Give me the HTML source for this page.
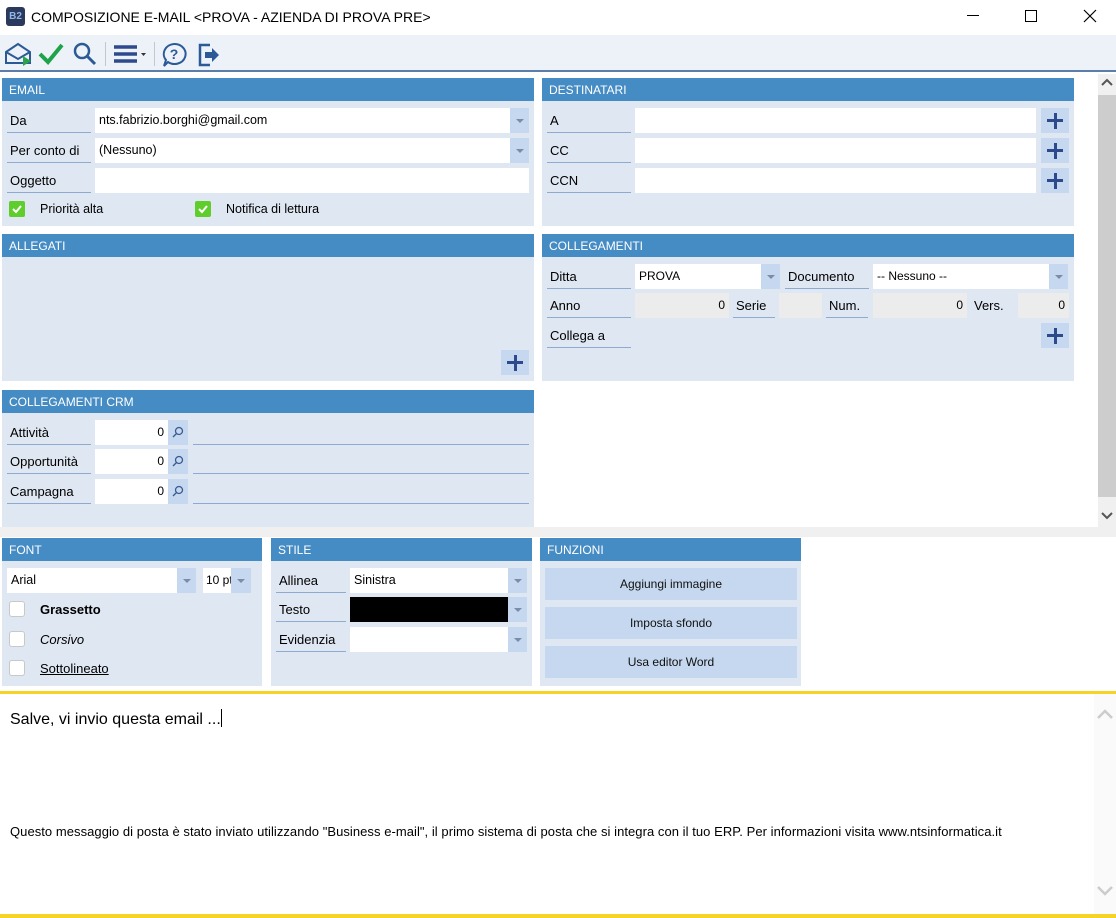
<!DOCTYPE html>
<html><head><meta charset="utf-8"><style>
*{box-sizing:border-box;margin:0;padding:0}
body{width:1116px;height:918px;background:#fff;position:relative;overflow:hidden;font-family:"Liberation Sans",Arial,sans-serif;font-size:13px;color:#000}
.a{position:absolute}
.hd{position:absolute;background:#468cc4;color:#fff;font-size:12px;height:23px;line-height:25px;padding-left:7px}
.pn{position:absolute;background:#dfe7f2}
.lb{position:absolute;height:25px;line-height:26px;padding-left:3px;border-bottom:1px solid #8eaad0;font-size:13px;white-space:nowrap}
.in{position:absolute;background:#fff;height:25px;line-height:25px;padding-left:4px;font-size:12px;white-space:nowrap;overflow:hidden}
.dis{position:absolute;background:#ececec;height:25px;line-height:25px;padding-right:4px;text-align:right;font-size:12px}
.dd{position:absolute;background:#c5d8ef;width:19px;height:25px}
.dd:after{content:"";position:absolute;left:6px;top:11px;border-left:4px solid transparent;border-right:4px solid transparent;border-top:4px solid #7a8ca8}
.pl{position:absolute;background:#c5d8ef;width:28px;height:25px}
.pl:before{content:"";position:absolute;left:6px;top:11px;width:16px;height:3px;background:#2c4a8c}
.pl:after{content:"";position:absolute;left:12.5px;top:4.5px;width:3px;height:16px;background:#2c4a8c}
.mg{position:absolute;background:#c5d8ef;width:20px;height:25px}
.cb{position:absolute;width:16px;height:16px;border:1px solid #c8c8c8;background:#fff;border-radius:3px}
.ck{position:absolute;width:16px;height:16px;background:#5fce2c;border-radius:2px}
.bt{position:absolute;background:#c5d8ef;height:32px;line-height:33px;text-align:center;font-size:12px;color:#111}
.ln{position:absolute;height:25px;border-bottom:1px solid #8eaad0}
</style></head><body>
<div class="a" style="left:6px;top:7px;width:19px;height:19px;background:#2b3a5c;border-radius:3px;color:#8fb6e8;font-size:10px;font-weight:bold;line-height:19px;text-align:center">B2</div>
<div class="a" style="left:31px;top:7px;font-size:14px;line-height:20px">COMPOSIZIONE E-MAIL &lt;PROVA - AZIENDA DI PROVA PRE&gt;</div>
<div class="a" style="left:967px;top:15px;width:12px;height:1px;background:#000"></div>
<div class="a" style="left:1025px;top:10px;width:12px;height:12px;border:1px solid #000"></div>
<svg class="a" style="left:1083px;top:9px" width="14" height="14"><path d="M1 1L13 13M13 1L1 13" stroke="#000" stroke-width="1.2"/></svg>
<div class="a" style="left:0;top:35px;width:1116px;height:37px;background:#edf2f9;border-bottom:2px solid #5a7ea8"></div>
<svg class="a" style="left:4px;top:41px" width="28" height="26"><path d="M2 11L14 3L26 11V22H2Z M2 11L14 18L26 11" fill="none" stroke="#2c5a96" stroke-width="2"/><path d="M19 15L27 20L19 25Z" fill="#2aa34a"/></svg>
<svg class="a" style="left:38px;top:42px" width="26" height="24"><path d="M2 12L10 20L24 3" fill="none" stroke="#1fa34a" stroke-width="4"/></svg>
<svg class="a" style="left:72px;top:42px" width="26" height="24"><circle cx="10" cy="9" r="7" fill="none" stroke="#2c5a96" stroke-width="2.5"/><path d="M15 14L23 22" stroke="#2c5a96" stroke-width="3"/></svg>
<div class="a" style="left:105px;top:42px;width:1px;height:24px;background:#c0c8d4"></div>
<svg class="a" style="left:113px;top:44px" width="38" height="20"><path d="M1 3H24M1 10H24M1 17H24" stroke="#2c4a8c" stroke-width="3.5"/><path d="M28 9L33 9L30.5 12Z" fill="#333"/></svg>
<div class="a" style="left:154px;top:42px;width:1px;height:24px;background:#c0c8d4"></div>
<svg class="a" style="left:161px;top:42px" width="26" height="26"><path d="M13 2A11 10 0 1 1 7 20L3 24L5 18A11 10 0 0 1 13 2Z" fill="none" stroke="#2c5a96" stroke-width="2"/><text x="13" y="17" font-family="Liberation Sans" font-weight="bold" font-size="14" fill="#2c5a96" text-anchor="middle">?</text></svg>
<svg class="a" style="left:196px;top:42px" width="26" height="26"><path d="M14 3H4V23H14" fill="none" stroke="#2c5a96" stroke-width="2.5"/><path d="M9 10H16V6L23 13L16 20V16H9Z" fill="#2c5a96"/></svg>
<div class="a" style="left:1098px;top:74px;width:18px;height:453px;background:#f0f0f0"></div>
<div class="a" style="left:1098px;top:95px;width:18px;height:402px;background:#cdcdcd"></div>
<svg class="a" style="left:1101px;top:78px" width="12" height="10"><path d="M1 7L6 2L11 7" fill="none" stroke="#555" stroke-width="2"/></svg>
<svg class="a" style="left:1101px;top:511px" width="12" height="10"><path d="M1 2L6 7L11 2" fill="none" stroke="#555" stroke-width="2"/></svg>
<div class="a" style="left:0;top:527px;width:1116px;height:10px;background:#f0f0f0"></div>

<div class="pn" style="left:2px;top:78px;width:532px;height:148px"></div>
<div class="hd" style="left:2px;top:78px;width:532px">EMAIL</div>
<div class="lb" style="left:7px;top:108px;width:84px">Da</div>
<div class="in" style="left:95px;top:108px;width:415px;font-size:12.5px">nts.fabrizio.borghi@gmail.com</div><div class="dd" style="left:510px;top:108px"></div>
<div class="lb" style="left:7px;top:138px;width:84px">Per conto di</div>
<div class="in" style="left:95px;top:138px;width:415px;font-size:12.5px">(Nessuno)</div><div class="dd" style="left:510px;top:138px"></div>
<div class="lb" style="left:7px;top:168px;width:84px">Oggetto</div>
<div class="in" style="left:95px;top:168px;width:434px"></div>
<div class="ck" style="left:9px;top:201px"></div><svg class="a" style="left:9px;top:201px" width="16" height="16"><path d="M4 8L7 11L12 5" fill="none" stroke="#fff" stroke-width="2"/></svg>
<div class="a" style="left:40px;top:202px;font-size:12.5px">Priorità alta</div>
<div class="ck" style="left:195px;top:201px"></div><svg class="a" style="left:195px;top:201px" width="16" height="16"><path d="M4 8L7 11L12 5" fill="none" stroke="#fff" stroke-width="2"/></svg>
<div class="a" style="left:226px;top:202px;font-size:12.5px">Notifica di lettura</div>

<div class="pn" style="left:542px;top:78px;width:532px;height:148px"></div>
<div class="hd" style="left:542px;top:78px;width:532px">DESTINATARI</div>
<div class="lb" style="left:547px;top:108px;width:84px">A</div><div class="in" style="left:635px;top:108px;width:401px"></div><div class="pl" style="left:1041px;top:108px"></div>
<div class="lb" style="left:547px;top:138px;width:84px">CC</div><div class="in" style="left:635px;top:138px;width:401px"></div><div class="pl" style="left:1041px;top:138px"></div>
<div class="lb" style="left:547px;top:168px;width:84px">CCN</div><div class="in" style="left:635px;top:168px;width:401px"></div><div class="pl" style="left:1041px;top:168px"></div>

<div class="pn" style="left:2px;top:234px;width:532px;height:147px"></div>
<div class="hd" style="left:2px;top:234px;width:532px">ALLEGATI</div>
<div class="pl" style="left:501px;top:350px"></div>

<div class="pn" style="left:542px;top:234px;width:532px;height:147px"></div>
<div class="hd" style="left:542px;top:234px;width:532px">COLLEGAMENTI</div>
<div class="lb" style="left:547px;top:264px;width:84px">Ditta</div>
<div class="in" style="left:635px;top:264px;width:126px">PROVA</div><div class="dd" style="left:761px;top:264px"></div>
<div class="lb" style="left:785px;top:264px;width:84px">Documento</div>
<div class="in" style="left:873px;top:264px;width:176px">-- Nessuno --</div><div class="dd" style="left:1049px;top:264px"></div>
<div class="lb" style="left:547px;top:293px;width:84px">Anno</div>
<div class="dis" style="left:635px;top:293px;width:94px">0</div>
<div class="lb" style="left:733px;top:293px;width:42px">Serie</div>
<div class="dis" style="left:779px;top:293px;width:43px"></div>
<div class="lb" style="left:826px;top:293px;width:42px">Num.</div>
<div class="dis" style="left:873px;top:293px;width:94px">0</div>
<div class="a" style="left:974px;top:293px;line-height:26px">Vers.</div>
<div class="dis" style="left:1018px;top:293px;width:51px">0</div>
<div class="lb" style="left:547px;top:323px;width:84px">Collega a</div>
<div class="pl" style="left:1041px;top:323px"></div>

<div class="pn" style="left:2px;top:390px;width:532px;height:137px"></div>
<div class="hd" style="left:2px;top:390px;width:532px">COLLEGAMENTI CRM</div>
<div class="lb" style="left:7px;top:420px;width:84px">Attività</div><div class="dis" style="left:95px;top:420px;width:73px;background:#fff">0</div><div class="mg" style="left:168px;top:420px"></div><div class="ln" style="left:193px;top:420px;width:336px"></div>
<div class="lb" style="left:7px;top:449px;width:84px">Opportunità</div><div class="dis" style="left:95px;top:449px;width:73px;background:#fff">0</div><div class="mg" style="left:168px;top:449px"></div><div class="ln" style="left:193px;top:449px;width:336px"></div>
<div class="lb" style="left:7px;top:479px;width:84px">Campagna</div><div class="dis" style="left:95px;top:479px;width:73px;background:#fff">0</div><div class="mg" style="left:168px;top:479px"></div><div class="ln" style="left:193px;top:479px;width:336px"></div>
<svg class="a" style="left:171px;top:425px" width="14" height="80"><g fill="none" stroke="#3a5a90" stroke-width="1.3"><circle cx="8" cy="6" r="3.5"/><path d="M5.5 8.5L2 12"/><circle cx="8" cy="35" r="3.5"/><path d="M5.5 37.5L2 41"/><circle cx="8" cy="65" r="3.5"/><path d="M5.5 67.5L2 71"/></g></svg>

<div class="pn" style="left:2px;top:538px;width:260px;height:148px"></div>
<div class="hd" style="left:2px;top:538px;width:260px">FONT</div>
<div class="in" style="left:7px;top:568px;width:170px;font-size:12.5px">Arial</div><div class="dd" style="left:177px;top:568px"></div>
<div class="in" style="left:203px;top:568px;width:28px;padding-left:3px;font-size:12px">10 pt</div><div class="dd" style="left:231px;top:568px;width:20px"></div>
<div class="cb" style="left:9px;top:601px"></div><div class="a" style="left:40px;top:602px;font-weight:bold">Grassetto</div>
<div class="cb" style="left:9px;top:631px"></div><div class="a" style="left:40px;top:632px;font-style:italic">Corsivo</div>
<div class="cb" style="left:9px;top:660px"></div><div class="a" style="left:40px;top:661px;text-decoration:underline">Sottolineato</div>

<div class="pn" style="left:271px;top:538px;width:261px;height:148px"></div>
<div class="hd" style="left:271px;top:538px;width:261px">STILE</div>
<div class="lb" style="left:276px;top:568px;width:70px">Allinea</div><div class="in" style="left:350px;top:568px;width:158px;font-size:12.5px">Sinistra</div><div class="dd" style="left:508px;top:568px"></div>
<div class="lb" style="left:276px;top:597px;width:70px">Testo</div><div class="in" style="left:350px;top:597px;width:158px;background:#000"></div><div class="dd" style="left:508px;top:597px"></div>
<div class="lb" style="left:276px;top:627px;width:70px">Evidenzia</div><div class="in" style="left:350px;top:627px;width:158px"></div><div class="dd" style="left:508px;top:627px"></div>

<div class="pn" style="left:540px;top:538px;width:261px;height:148px"></div>
<div class="hd" style="left:540px;top:538px;width:261px">FUNZIONI</div>
<div class="bt" style="left:545px;top:568px;width:252px">Aggiungi immagine</div>
<div class="bt" style="left:545px;top:607px;width:252px">Imposta sfondo</div>
<div class="bt" style="left:545px;top:646px;width:252px">Usa editor Word</div>

<div class="a" style="left:0;top:691px;width:1116px;height:3px;background:#f5d327"></div>
<div class="a" style="left:0;top:914px;width:1116px;height:4px;background:#f5d327"></div>
<div class="a" style="left:1094px;top:694px;width:22px;height:220px;background:#fafafa"></div>
<svg class="a" style="left:1097px;top:708px" width="16" height="12"><path d="M1 10L8 3L15 10" fill="none" stroke="#ccc" stroke-width="2.5"/></svg>
<svg class="a" style="left:1097px;top:885px" width="16" height="12"><path d="M1 2L8 9L15 2" fill="none" stroke="#ccc" stroke-width="2.5"/></svg>
<div class="a" style="left:10px;top:709px;font-size:16px;line-height:20px">Salve, vi invio questa email ...<span style="display:inline-block;width:1px;height:18px;background:#000;vertical-align:-3px"></span></div>
<div class="a" style="left:10px;top:824px;font-size:13px;white-space:nowrap;letter-spacing:0.05px">Questo messaggio di posta è stato inviato utilizzando "Business e-mail", il primo sistema di posta che si integra con il tuo ERP. Per informazioni visita www.ntsinformatica.it</div>
</body></html>
